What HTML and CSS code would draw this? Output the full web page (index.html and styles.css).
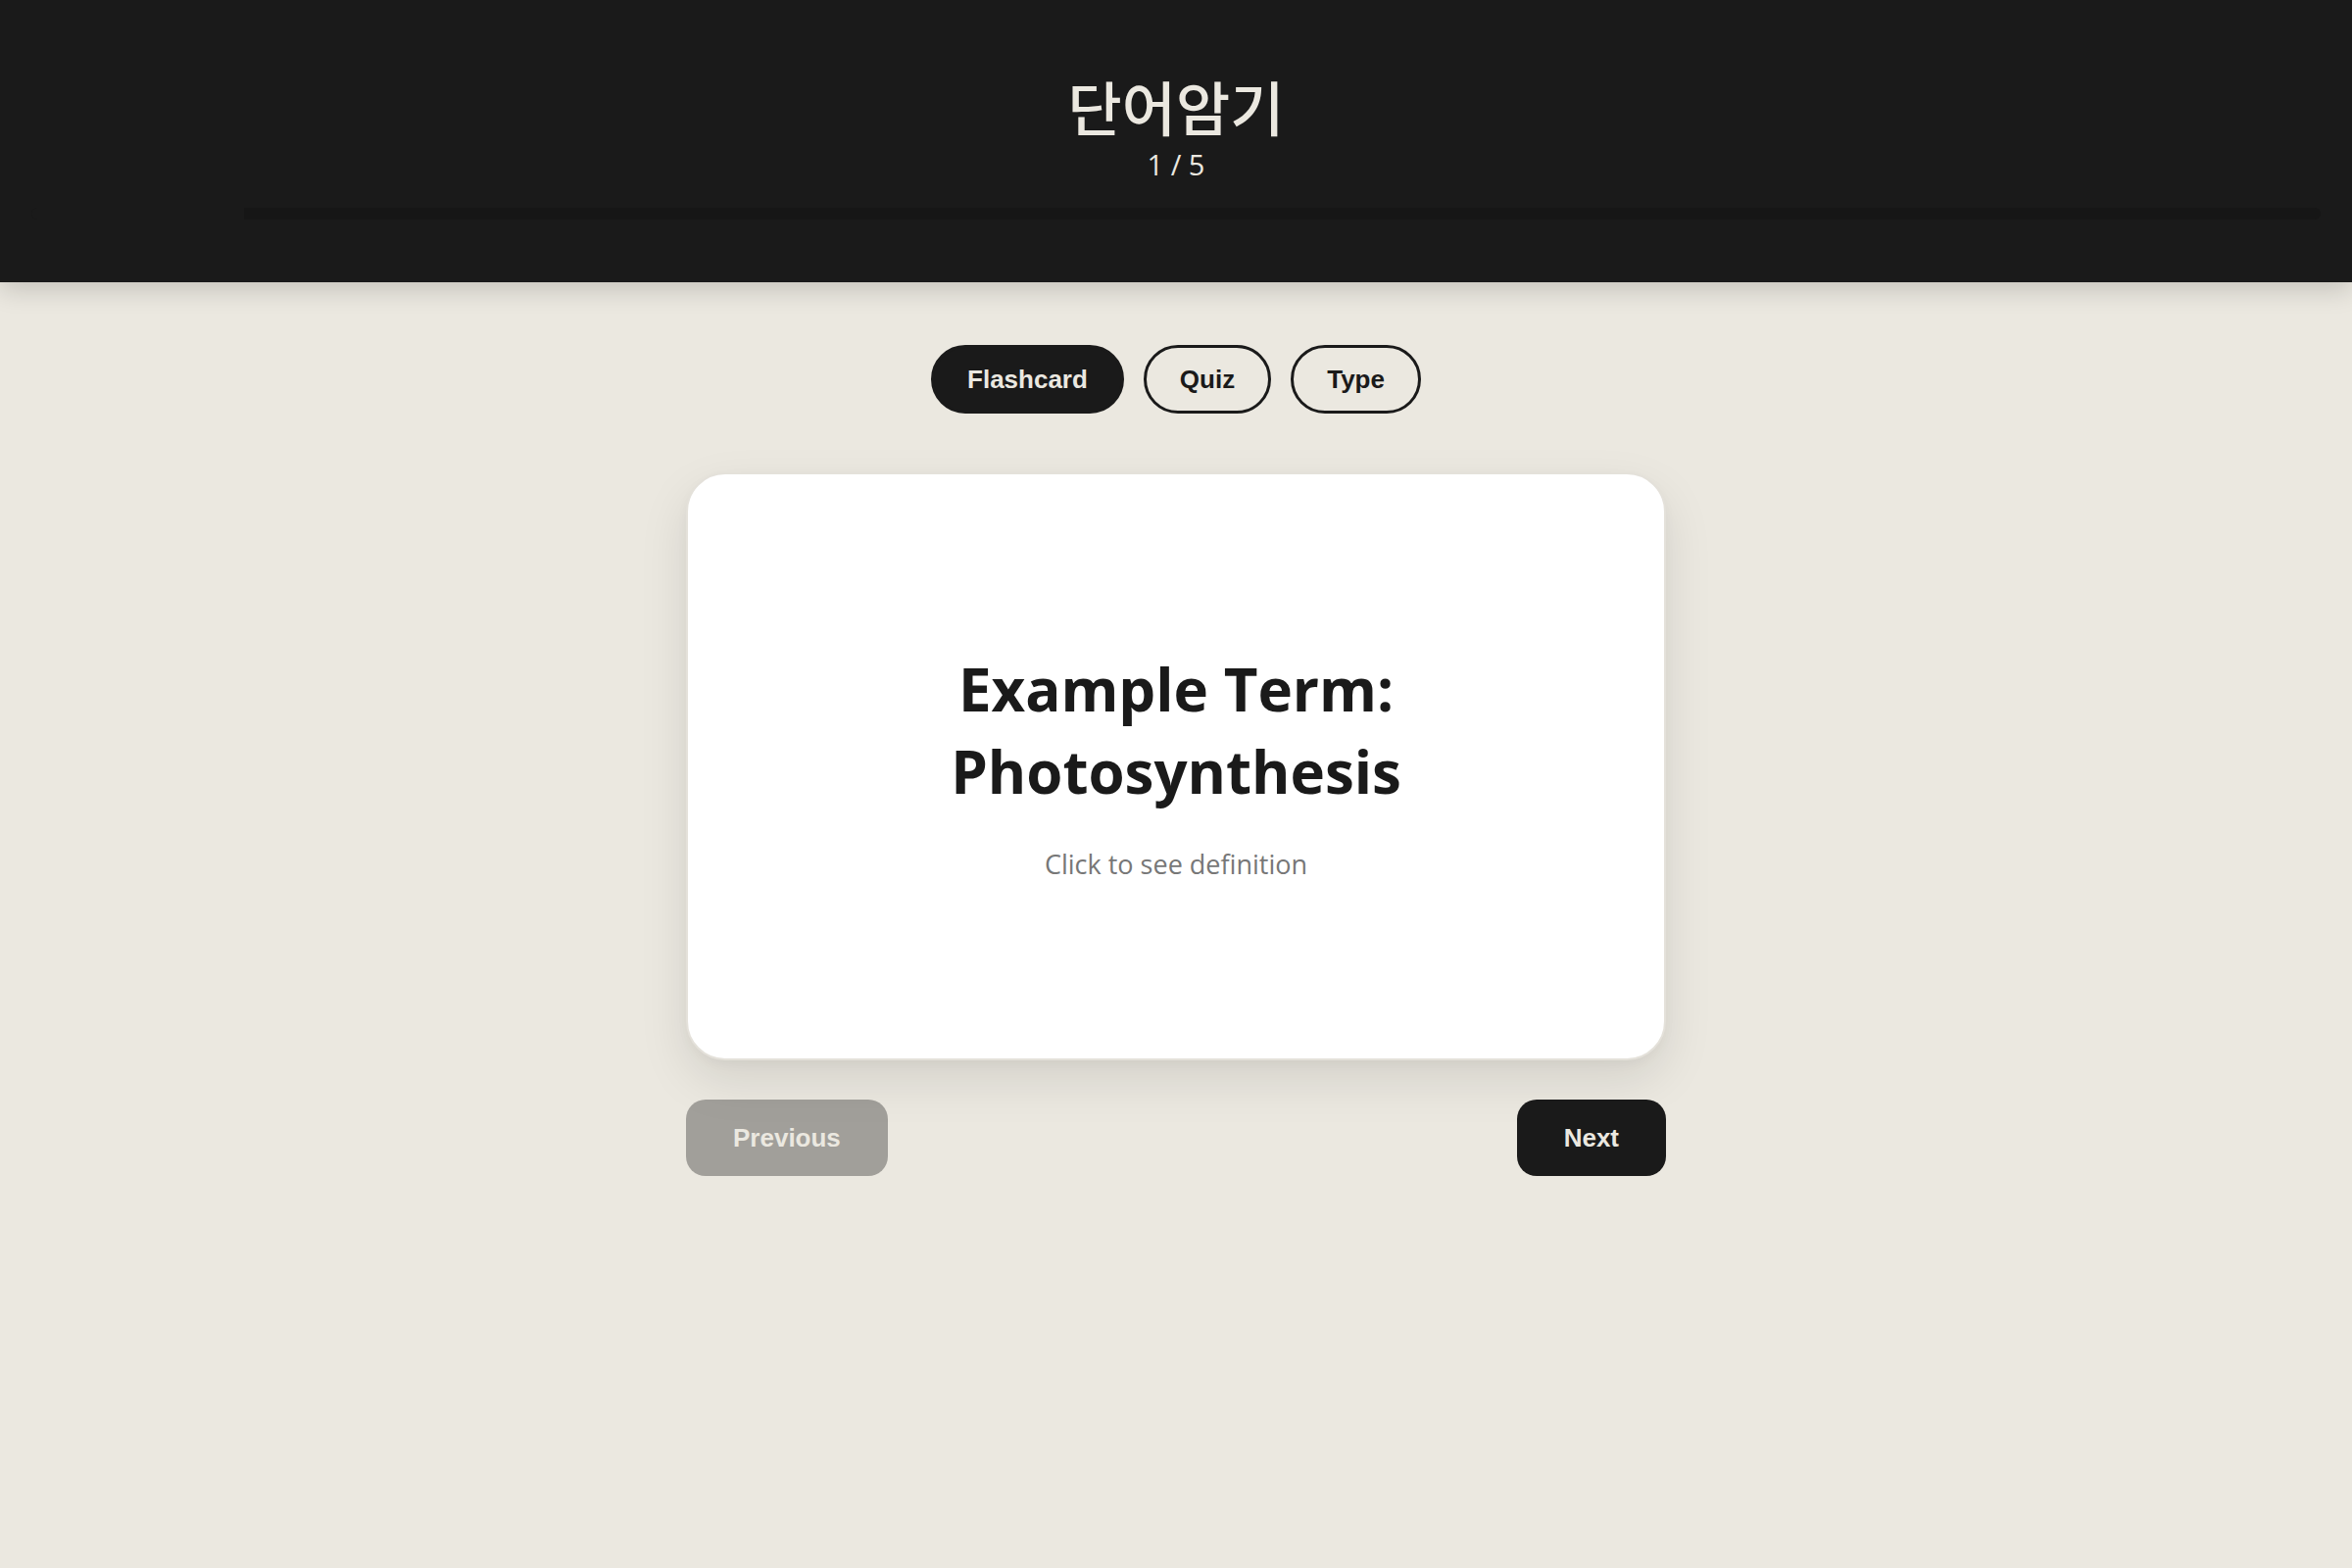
FILE: index.html
```html
<!DOCTYPE html>
<html lang="ko">
<head>
<meta charset="utf-8">
<title>단어암기</title>
<link rel="stylesheet" href="styles.css">
</head>
<body>
<header class="top">
  <h1 class="title">단어암기</h1>
  <div class="counter">1 / 5</div>
  <div class="progress"><div class="progress-fill" style="width: 9.3%"></div></div>
</header>
<main class="main">
  <nav class="tabs">
    <button class="tab tab-active">Flashcard</button>
    <button class="tab">Quiz</button>
    <button class="tab">Type</button>
  </nav>
  <section class="card">
    <h2 class="term">Example Term: Photosynthesis</h2>
    <p class="hint">Click to see definition</p>
  </section>
  <div class="nav-row">
    <button class="nav-btn nav-btn-disabled">Previous</button>
    <button class="nav-btn">Next</button>
  </div>
</main>
</body>
</html>
```
FILE: styles.css
```css
* { box-sizing: border-box; }

html, body {
  margin: 0;
  padding: 0;
}

body {
  background: #ebe8e0;
  min-height: 100vh;
  font-family: "Open Sans", "Noto Sans", sans-serif;
  color: #1a1a1a;
}

.top {
  background: #1a1a1a;
  padding: 72px 32px 64px;
  text-align: center;
  box-shadow: 0 8px 24px rgba(0, 0, 0, 0.16);
}

.title {
  margin: 0;
  font-family: "Noto Sans CJK KR", "Noto Sans", sans-serif;
  font-weight: 500;
  font-size: 60px;
  line-height: 72px;
  color: #ebe8e0;
}

.counter {
  margin-top: 2px;
  font-family: "Open Sans", sans-serif;
  font-size: 29px;
  line-height: 43px;
  color: #ebe8e0;
}

.progress {
  margin-top: 23px;
  height: 12px;
  border-radius: 6px;
  background: #161616;
  overflow: hidden;
}

.progress-fill {
  height: 100%;
  background: #1a1a1a;
}

.main {
  width: 1000px;
  margin: 64px auto 0;
  display: flex;
  flex-direction: column;
  align-items: stretch;
}

.tabs {
  display: flex;
  justify-content: center;
  gap: 20px;
  margin-bottom: 60px;
}

.tab {
  font-family: "Liberation Sans", Arial, sans-serif;
  font-weight: 700;
  font-size: 26px;
  line-height: 30px;
  padding: 17px 34px;
  border: 3px solid #1a1a1a;
  border-radius: 999px;
  background: transparent;
  color: #1a1a1a;
  cursor: pointer;
}

.tab-active {
  background: #1a1a1a;
  color: #ebe8e0;
}

.card {
  height: 600px;
  background: #ffffff;
  border: 2px solid #e4e1da;
  border-radius: 40px;
  padding: 0 80px;
  display: flex;
  flex-direction: column;
  align-items: center;
  justify-content: center;
  text-align: center;
  box-shadow: 0 20px 50px rgba(0, 0, 0, 0.1), 0 4px 12px rgba(0, 0, 0, 0.03);
}

.term {
  margin: 0;
  font-family: "Open Sans", sans-serif;
  font-weight: 700;
  font-size: 60px;
  line-height: 1.4;
  color: #1a1a1a;
}

.hint {
  margin: 33px 0 0;
  font-family: "Open Sans", sans-serif;
  font-size: 27px;
  line-height: 1.5;
  color: #777777;
}

.nav-row {
  display: flex;
  justify-content: space-between;
  margin-top: 40px;
}

.nav-btn {
  font-family: "Liberation Sans", Arial, sans-serif;
  font-weight: 700;
  font-size: 26px;
  line-height: 30px;
  padding: 24px 48px;
  border: none;
  border-radius: 20px;
  background: #1a1a1a;
  color: #ebe8e0;
  cursor: pointer;
}

.nav-btn-disabled {
  opacity: 0.35;
  cursor: default;
}
```
